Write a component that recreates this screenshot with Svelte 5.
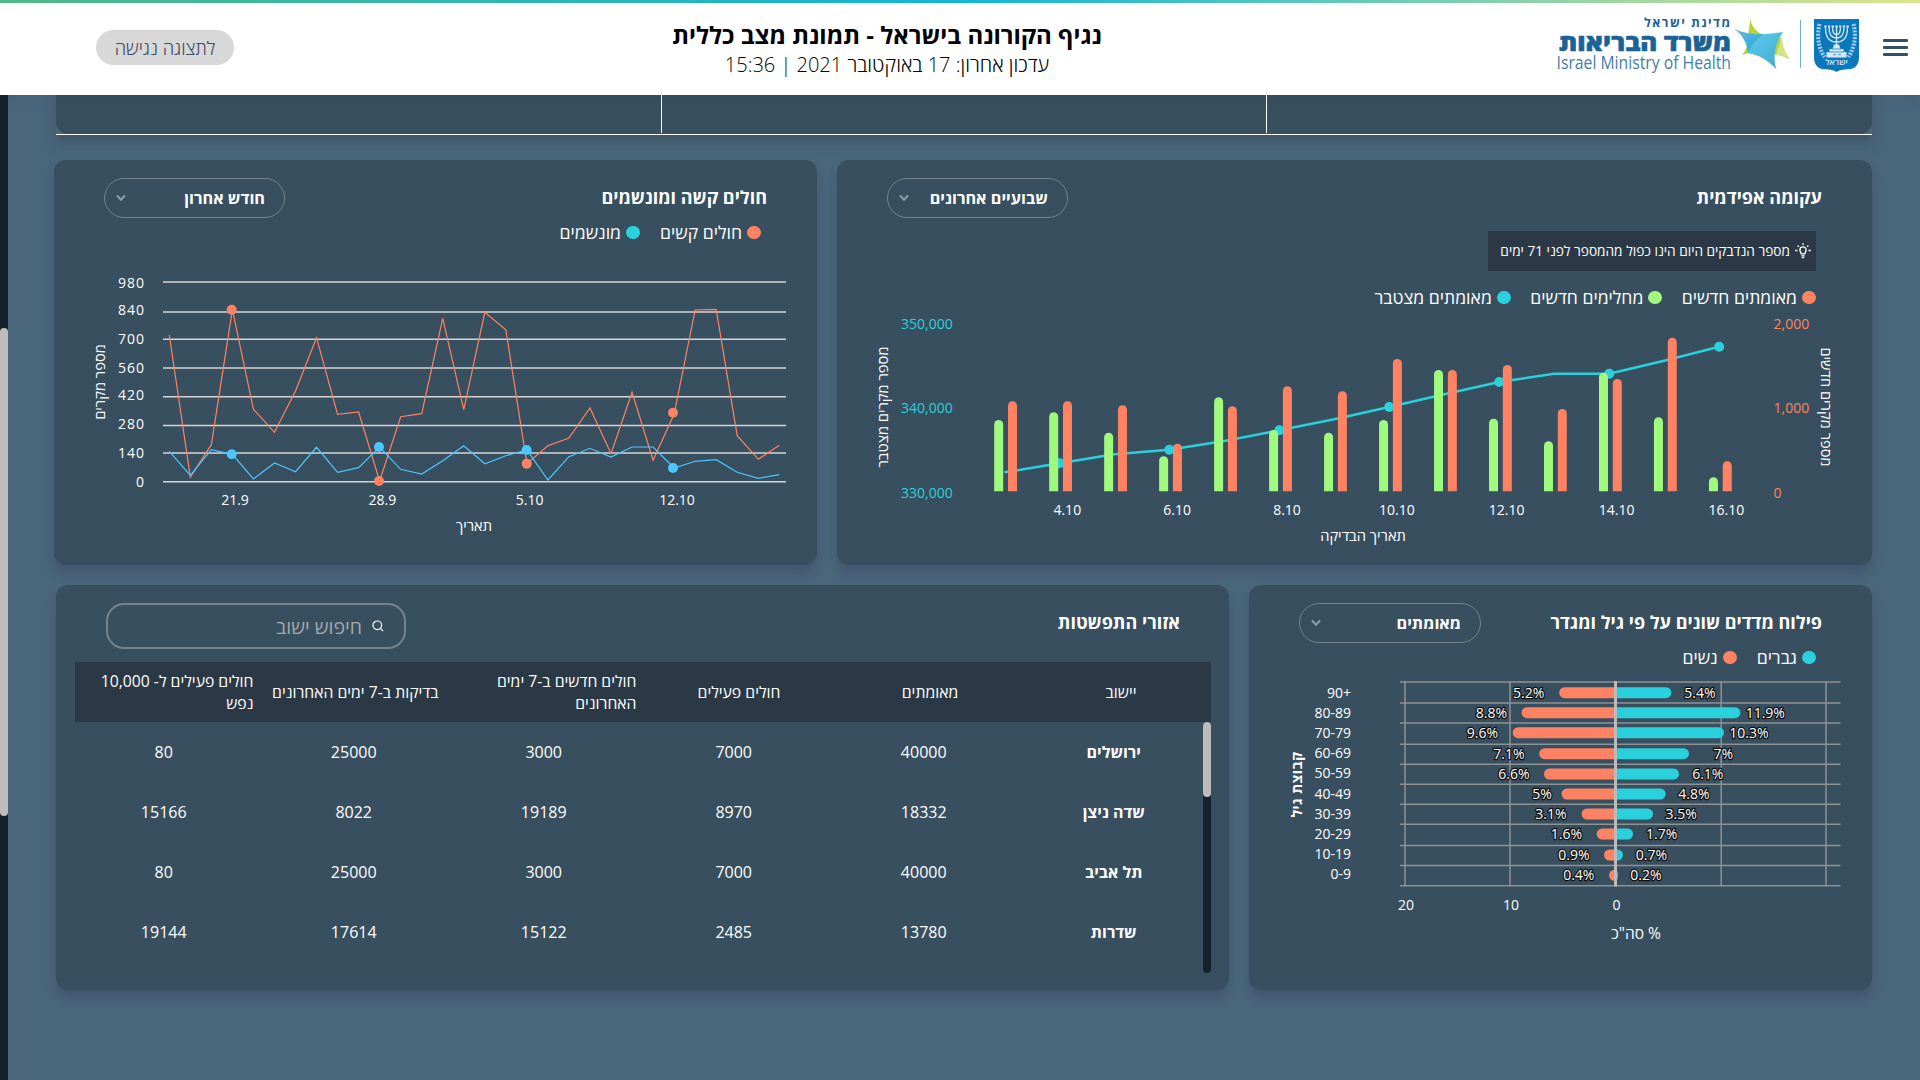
<script>
  const menuBars = [0, 1, 2];

  // Severe and ventilated patients, last month
  const patientX = (i) => 169.3 + 21.034 * i;
  const severe = [335, 477, 444.7, 309.7, 409.3, 432.3, 391, 337.7, 414.3, 412, 481, 416.7, 413.7, 318.3, 409.7, 312.3, 329.7, 463.7, 445.7, 438, 408, 453.7, 392.3, 460.3, 414, 310, 309.3, 435.7, 459.3, 445.3];
  const ventilated = [451.3, 475.3, 449.7, 454.3, 479, 463, 471.7, 447.3, 472.3, 467.7, 447, 469.3, 474, 460.7, 445.7, 463.7, 455.7, 450, 480, 456.7, 448.3, 457, 447, 447, 468, 461.3, 459.7, 472.3, 478.3, 474.7];
  const toPoints = (values, xAt) => values.map((y, i) => `${xAt(i)},${y}`).join(' ');
  const patientGrid = [
    { label: '980', y: 282, base: 288 },
    { label: '840', y: 312, base: 315 },
    { label: '700', y: 339.2, base: 344 },
    { label: '560', y: 368, base: 373 },
    { label: '420', y: 396.8, base: 400 },
    { label: '280', y: 425.4, base: 429 },
    { label: '140', y: 453, base: 458 },
    { label: '0', y: 481.8, base: 487 }
  ];
  const patientDates = [
    { label: '21.9', x: 235 },
    { label: '28.9', x: 382.3 },
    { label: '5.10', x: 529.7 },
    { label: '12.10', x: 677 }
  ];
  const markers = [
    { x: 231.7, severe: 309.7, vent: 454.3 },
    { x: 379, severe: 481, vent: 447 },
    { x: 526.7, severe: 463.7, vent: 450 },
    { x: 673, severe: 412.7, vent: 468 }
  ];

  // Epidemic curve, last two weeks
  const dayX = (i) => 1004.4 + 54.98 * i;
  const recovered = [420, 412.3, 432.7, 456.3, 397.3, 430, 432.7, 420, 370, 418.7, 441.3, 372.7, 417.3, 477.3];
  const confirmed = [401.3, 401.3, 405.3, 443.7, 406.3, 386.3, 391.3, 359, 370, 365, 409, 379, 337.7, 461.3];
  const cumulative = [472.3, 463.3, 454.3, 449.7, 441, 430.3, 419.3, 407, 394.3, 382, 373.7, 373.7, 360.7, 346.7];
  const barPath = (x, top) => `M${x} 491.3V${top + 4.5}a4.5 4.5 0 0 1 9 0V491.3z`;
  const epiDates = ['4.10', '6.10', '8.10', '10.10', '12.10', '14.10', '16.10'];
  const epiScale = [
    { left: '350,000', right: '2,000', y: 329 },
    { left: '340,000', right: '1,000', y: 413 },
    { left: '330,000', right: '0', y: 498 }
  ];

  // Age and gender breakdown
  const ages = [
    { age: '90+', y: 692.7, base: 698, w: 5.2, wx: 1559.2, wl: 1528.6, m: 5.4, mx: 1671.4, ml: 1700 },
    { age: '80-89', y: 712.7, base: 718, w: 8.8, wx: 1521.6, wl: 1491.4, m: 11.9, mx: 1740.4, ml: 1765.3 },
    { age: '70-79', y: 732.7, base: 738, w: 9.6, wx: 1512.7, wl: 1482.4, m: 10.3, mx: 1724, ml: 1749 },
    { age: '60-69', y: 753.7, base: 758, w: 7.1, wx: 1539.2, wl: 1509, m: 7, mx: 1689, ml: 1723.3 },
    { age: '50-59', y: 774, base: 778, w: 6.6, wx: 1544, wl: 1513.9, m: 6.1, mx: 1679, ml: 1707.8 },
    { age: '40-49', y: 794, base: 799, w: 5, wx: 1561.6, wl: 1542, m: 4.8, mx: 1665.7, ml: 1693.9 },
    { age: '30-39', y: 814, base: 819, w: 3.1, wx: 1581.6, wl: 1551, m: 3.5, mx: 1653, ml: 1681.2 },
    { age: '20-29', y: 834, base: 839, w: 1.6, wx: 1596.7, wl: 1566.5, m: 1.7, mx: 1633, ml: 1661.6 },
    { age: '10-19', y: 855, base: 859, w: 0.9, wx: 1604, wl: 1573.9, m: 0.7, mx: 1622.9, ml: 1651.4 },
    { age: '0-9', y: 875.3, base: 879, w: 0.4, wx: 1609, wl: 1578.8, m: 0.2, mx: 1618, ml: 1646 }
  ];
  const ageLines = [682, 703, 723, 744.2, 764.3, 784.3, 804.3, 824.3, 845.6, 865.6, 885.8];
  const percentLines = [1405, 1510, 1721.2, 1826];
  const womenPath = (a) => {
    const r = Math.min(5.5, 1615.5 - a.wx);
    return `M1615.5 ${a.y - 5.5}H${a.wx + r}a${r} 5.5 0 0 0 0 11H1615.5z`;
  };
  const menPath = (a) => {
    const r = Math.min(5.5, a.mx - 1615.5);
    return `M1615.5 ${a.y - 5.5}H${a.mx - r}a${r} 5.5 0 0 1 0 11H1615.5z`;
  };

  const headings = ['יישוב', 'מאומתים', 'חולים פעילים', 'חולים חדשים ב-7 ימים האחרונים', 'בדיקות ב-7 ימים האחרונים', 'חולים פעילים ל- 10,000 נפש'];
  const towns = [
    ['ירושלים', 40000, 7000, 3000, 25000, 80],
    ['שדה ניצן', 18332, 8970, 19189, 8022, 15166],
    ['תל אביב', 40000, 7000, 3000, 25000, 80],
    ['שדרות', 13780, 2485, 15122, 17614, 19144]
  ];
</script>

{#snippet dropdown(label)}
  <button class="dropdown">
    <span>{label}</span>
    <svg width="10" height="8" viewBox="0 0 10 8"><path d="M1 1.500l4 4.300 4-4.300" /></svg>
  </button>
{/snippet}

{#snippet legend(items)}
  <div class="legend">
    {#each items as item}
      <span class="key"><i class={item.tone}></i>{item.text}</span>
    {/each}
  </div>
{/snippet}

<div class="page" dir="rtl">
  <header>
    <div class="brand">
      <div class="menu">{#each menuBars as bar}<i></i>{/each}</div>
      <svg class="logo" width="304" height="70" viewBox="1556 8 304 70">
        <defs>
          <linearGradient id="starBlue" x1="0" y1="0" x2="1" y2="1">
            <stop offset="0" stop-color="#6fb4dc" />
            <stop offset=".5" stop-color="#1fb0dc" />
            <stop offset="1" stop-color="#0a86c0" />
          </linearGradient>
        </defs>
        <text class="state" x="1730" y="26.800" textLength="86" lengthAdjust="spacing">מדינת ישראל</text>
        <text class="ministry" x="1731" y="51" textLength="172" lengthAdjust="spacingAndGlyphs">משרד הבריאות</text>
        <text class="english" x="1556.500" y="68.800" textLength="174.500" lengthAdjust="spacingAndGlyphs">Israel Ministry of Health</text>
        <path fill="#b5d334" d="M1750 18c1 8 6 14 14 17l16 1c1 8 4 16 10 23-9-4-18-6-25-4-8-3-15-3-23 0 5-6 7-13 6-20 1-6 2-11 2-17z" />
        <path fill="#d3e38b" d="M1783 33c-2 9 1 18 7 26-4-2-9-4-14-4z" />
        <path fill="url(#starBlue)" d="M1735 29c14 7 29 6 48 3-9 12-10 24-7 37-7-8-16-14-28-16-1-10-5-17-13-24z" />
        <path fill="#9bd6ea" opacity=".4" d="M1748 53c4-9 9-16 19-20l16-1c-9 12-10 24-7 37-7-8-16-14-28-16z" />
        <path stroke="#6fb0d8" stroke-width="1" d="M1800.500 20v48" />
        <path fill="#0b78be" d="M1814 19h45v38c0 8-4 12-11 12.300-5 .2-9 .7-11.500 2.700-2.500-2-6.500-2.500-11.500-2.700-7-.3-11-4.300-11-12.300z" />
        <g class="emblem">
          <path d="M1825.500 27.500c0 10 4 14.500 11 14.500s11-4.500 11-14.500M1829 27.500c0 7 2.500 10.500 7.500 10.500s7.500-3.500 7.500-10.500M1832.500 27.500c0 4.500 1 7 4 7s4-2.500 4-7M1836.500 26.500v24" />
          <path stroke-width="1.800" d="M1824.300 26.500h24.600" stroke-dasharray="2.300 1.400" />
        </g>
        <path fill="#d6e9f6" d="M1834 44.500h5l1.500 4.500h3v3h3v5.500h-20V52h3v-3h3z" />
        <path fill="none" stroke="#0b78be" stroke-width=".7" d="M1829 52h15M1832 49h9M1833 54.700h3M1838 54.700h3" />
        <g class="leaf">
          <path d="M1819.500 24c-2.500 10-2 22 5 33" />
          <path d="M1853.500 24c2.500 10 2 22-5 33" />
        </g>
        <text class="israel" x="1836.500" y="65">ישראל</text>
      </svg>
    </div>
    <div class="heading">
      <h1>נגיף הקורונה בישראל - תמונת מצב כללית</h1>
      <p>עדכון אחרון: 17 באוקטובר 2021 | 15:36</p>
    </div>
    <button class="access">לתצוגה נגישה</button>
  </header>

  <div class="body">
    <main>
      <div class="strip-frame">
        <div class="strip"><span></span><span></span><span></span></div>
      </div>

      <div class="row top">
        <section>
          <div class="head"><h2>עקומה אפידמית</h2>{@render dropdown('שבועיים אחרונים')}</div>
          <div class="tip">
            <svg width="16" height="16" viewBox="0 0 16 16">
              <path d="M6.200 10.800C6 9.300 4.900 8.600 4.900 6.900a3.100 3.100 0 0 1 6.200 0c0 1.700-1.100 2.400-1.300 3.900zM6.300 12.800h3.400M6.800 14.600h2.400M8 .300v1.700M.200 7.500h2.300M13.500 7.500h2.300M2.600 2.500l1.200 1.200M13.400 2.500l-1.200 1.200" />
            </svg>
            <span>מספר הנדבקים היום הינו כפול מהמספר לפני 71 ימים</span>
          </div>
          {@render legend([
            { tone: 'coral', text: 'מאומתים חדשים' },
            { tone: 'green', text: 'מחלימים חדשים' },
            { tone: 'teal', text: 'מאומתים מצטבר' }
          ])}
          <svg class="chart" width="1035" height="255" viewBox="837 310 1035 255">
            {#each epiScale as s}
              <text class="cyan" x="901" y={s.y}>{s.left}</text>
              <text class="warm" x="1773.500" y={s.y}>{s.right}</text>
            {/each}
            <polyline class="trend" points={toPoints(cumulative, dayX)} />
            {#each cumulative as y, i}
              {#if i % 2}<circle cx={dayX(i)} cy={y} r="5" fill="#2ad1dc" />{/if}
            {/each}
            {#each recovered as y, i}
              <path fill="#a0fa7d" d={barPath(dayX(i) - 10.2, y)} />
              <path fill="#ff8362" d={barPath(dayX(i) + 3.6, confirmed[i])} />
            {/each}
            {#each epiDates as d, i}
              <text class="mid" x={1067.300 + 109.850 * i} y="515">{d}</text>
            {/each}
            <text class="mid heb" x="1363" y="541">תאריך הבדיקה</text>
            <text class="mid heb" transform="translate(887.800 407) rotate(-90)">מספר מקרים מצטבר</text>
            <text class="mid heb" transform="translate(1820.500 407) rotate(90)">מספר מקרים חדשים</text>
          </svg>
        </section>

        <section>
          <div class="head"><h2>חולים קשה ומונשמים</h2>{@render dropdown('חודש אחרון')}</div>
          {@render legend([
            { tone: 'coral', text: 'חולים קשים' },
            { tone: 'teal', text: 'מונשמים' }
          ])}
          <svg class="chart" width="763" height="320" viewBox="54 245 763 320">
            {#each patientGrid as g}
              <path class="grid" d="M163 {g.y}H786" />
              <text class="scale" x="145" y={g.base}>{g.label}</text>
            {/each}
            <polyline class="thin" stroke="#ff8362" points={toPoints(severe, patientX)} />
            {#each markers as m}<circle cx={m.x} cy={m.severe} r="5" fill="#ff8362" />{/each}
            <polyline class="thin" stroke="#4cc6ff" points={toPoints(ventilated, patientX)} />
            {#each markers as m}<circle cx={m.x} cy={m.vent} r="5" fill="#4cc6ff" />{/each}
            {#each patientDates as d}<text class="mid" x={d.x} y="505">{d.label}</text>{/each}
            <text class="mid heb" x="474" y="531">תאריך</text>
            <text class="mid heb" transform="translate(105 382) rotate(-90)">מספר מקרים</text>
          </svg>
        </section>
      </div>

      <div class="row bottom">
        <section>
          <div class="head"><h2>פילוח מדדים שונים על פי גיל ומגדר</h2>{@render dropdown('מאומתים')}</div>
          {@render legend([
            { tone: 'teal', text: 'גברים' },
            { tone: 'coral', text: 'נשים' }
          ])}
          <svg class="chart" width="623" height="320" viewBox="1249 670 623 320">
            {#each ageLines as y}<path class="cell" d="M1400 {y}H1840.500" />{/each}
            {#each percentLines as x}<path class="cell" d="M{x} 681V886.500" />{/each}
            {#each ages as a}
              <path fill="#ff8362" d={womenPath(a)} />
              <path fill="#2ad1dc" d={menPath(a)} />
            {/each}
            <path class="zero" d="M1615.500 681V886.500" />
            {#each ages as a}
              <text class="end" x="1351" y={a.base}>{a.age}</text>
              <text class="mid value" x={a.wl} y={a.y + 4.9}>{a.w}%</text>
              <text class="mid value" x={a.ml} y={a.y + 4.9}>{a.m}%</text>
            {/each}
            <text class="mid" x="1406" y="910">20</text>
            <text class="mid" x="1511" y="910">10</text>
            <text class="mid" x="1616.500" y="910">0</text>
            <text class="mid heb total" x="1636" y="938.500">% סה"כ</text>
            <text class="mid heb strong" transform="translate(1302 784.500) rotate(-90)">קבוצת גיל</text>
          </svg>
        </section>

        <section>
          <div class="head">
            <h2>אזורי התפשטות</h2>
            <div class="search">
              <svg width="12" height="12" viewBox="0 0 12 12"><circle cx="5.300" cy="5.300" r="4.300" /><path d="M8.400 8.400l2.600 2.600" /></svg>
              <span>חיפוש ישוב</span>
            </div>
          </div>
          <div class="table">
            <div class="thead">
              {#each headings as h}<div>{h}</div>{/each}
            </div>
            <div class="tbody">
              <div class="lines">
                {#each towns as town}
                  <div class="line-row">
                    {#each town as cell}<div>{cell}</div>{/each}
                  </div>
                {/each}
              </div>
              <div class="track"><div class="thumb"></div></div>
            </div>
          </div>
        </section>
      </div>
    </main>
    <div class="page-track"><div class="page-thumb"></div></div>
  </div>
</div>

<style>
  :global(body) {
    background: #4a667b;
  }
  .page {
    width: 1920px;
    height: 1080px;
    overflow: hidden;
    display: flex;
    flex-direction: column;
    background: #4a667b;
    color: #fff;
    font-family: 'Open Sans', 'Noto Sans', sans-serif;
  }
  h1,
  h2,
  p {
    margin: 0;
  }
  button {
    font-family: inherit;
    padding: 0;
    box-sizing: border-box;
  }
  header {
    position: relative;
    z-index: 1;
    flex: none;
    height: 95px;
    box-sizing: border-box;
    padding: 0 12px 0 96px;
    display: grid;
    grid-template-columns: 1fr 600px 491px;
    align-items: start;
    background:
      linear-gradient(90deg, #50b987, #12b5d8 50%, #dce689) top / 100% 3px no-repeat,
      #fff;
    box-shadow: 0 3px 16px rgba(50, 60, 90, 0.12);
  }
  .brand {
    display: flex;
    gap: 23px;
    padding-top: 8px;
  }
  .menu {
    width: 25px;
    padding-top: 31px;
    display: flex;
    flex-direction: column;
    gap: 4px;
  }
  .menu i {
    height: 3px;
    border-radius: 1px;
    background: #384f63;
  }
  .logo .state,
  .logo .ministry {
    direction: rtl;
    fill: #1b6296;
  }
  .logo .state {
    font-size: 12.5px;
    font-weight: 700;
  }
  .logo .ministry {
    font-size: 24px;
    font-weight: 800;
    stroke: #1b6296;
    stroke-width: 0.5px;
  }
  .logo .english {
    direction: ltr;
    font-size: 17.5px;
    fill: #3f7fae;
  }
  .logo .israel {
    direction: rtl;
    text-anchor: middle;
    font-size: 8.5px;
    font-weight: 600;
    fill: #d6e9f6;
  }
  .emblem {
    fill: none;
    stroke: #d6e9f6;
    stroke-width: 1.3;
  }
  .leaf {
    fill: none;
    stroke: #a9d0ea;
    stroke-width: 4;
    stroke-dasharray: 2 1.3;
  }
  .heading {
    padding-top: 18px;
    text-align: center;
    color: #000;
  }
  h1 {
    font-size: 24px;
    line-height: 33px;
    font-weight: 700;
  }
  .heading p {
    font-size: 20px;
    line-height: 27px;
    font-weight: 300;
  }
  .access {
    justify-self: end;
    width: 138px;
    height: 35px;
    margin-top: 30px;
    border: 0;
    border-radius: 18px;
    background: #d8d8d8;
    color: #3f4a63;
    font-size: 18.4px;
    font-weight: 300;
  }
  .body {
    flex: 1;
    display: flex;
    justify-content: space-between;
  }
  main {
    padding-right: 48px;
  }
  .page-track {
    width: 8px;
    background: #15222b;
  }
  .page-thumb {
    height: 488px;
    margin-top: 233px;
    border-radius: 4px;
    background: #c0bcbc;
  }
  .strip-frame {
    width: 1816px;
    border-bottom: 1px solid #fff;
    box-shadow: 0 8px 10px rgba(56, 72, 88, 0.5);
  }
  .strip {
    height: 39px;
    display: grid;
    grid-template-columns: 606px 605px 605px;
    border-radius: 0 0 12px 12px;
    background: #384f5f;
  }
  .strip span {
    margin-bottom: 1px;
    border-left: 1px solid #fff;
  }
  .strip span:last-child {
    border: 0;
  }
  .row {
    display: flex;
    gap: 20px;
  }
  .top {
    margin-top: 25px;
  }
  .bottom {
    margin-top: 20px;
  }
  section {
    height: 405px;
    border-radius: 12px;
    background: #384f5f;
    box-shadow: 0 8px 10px rgba(56, 72, 98, 0.45);
  }
  .top section:first-child {
    width: 1035px;
  }
  .top section:last-child {
    width: 763px;
  }
  .bottom section:first-child {
    width: 623px;
  }
  .bottom section:last-child {
    width: 1173px;
  }
  .head {
    height: 40px;
    padding: 18px 50px 0;
    display: flex;
    justify-content: space-between;
  }
  .bottom section:last-child .head {
    padding-right: 49px;
  }
  h2 {
    font-size: 18px;
    line-height: 38px;
    font-weight: 700;
  }
  .dropdown {
    width: 181px;
    height: 40px;
    padding: 0 19px 1px 11px;
    border: 1px solid #76828b;
    border-radius: 20px;
    display: flex;
    align-items: center;
    justify-content: space-between;
    background: none;
    color: #fff;
    font-size: 16.2px;
    font-weight: 700;
  }
  .bottom .dropdown {
    width: 182px;
  }
  .dropdown svg {
    fill: none;
    stroke: #8c9bb5;
    stroke-width: 2;
  }
  .tip {
    width: 328px;
    height: 40px;
    box-sizing: border-box;
    margin: 13px 56px 0 0;
    padding: 0 5px 1px 0;
    display: flex;
    align-items: center;
    gap: 5px;
    background: #2b3947;
    font-size: 13.65px;
  }
  .tip svg {
    fill: none;
    stroke: #fff;
    stroke-width: 1.3;
  }
  .legend {
    height: 25px;
    margin: 2px 56px 0 0;
    display: flex;
    align-items: center;
    gap: 20px;
    font-size: 17.6px;
    line-height: 25px;
  }
  .tip + .legend {
    margin-top: 14px;
    gap: 19.5px;
  }
  .key {
    display: flex;
    align-items: center;
    gap: 5px;
  }
  .key i {
    width: 14px;
    height: 13px;
    border-radius: 7px;
  }
  .coral {
    background: #ff8362;
  }
  .green {
    background: #a0fa7d;
  }
  .teal {
    background: #2ad1dc;
  }
  .chart {
    display: block;
    direction: ltr;
    font-size: 14px;
    fill: #fff;
  }
  .mid {
    text-anchor: middle;
  }
  .end {
    text-anchor: end;
  }
  .heb {
    direction: rtl;
    font-size: 14.7px;
  }
  .total {
    font-size: 15.5px;
  }
  .strong {
    font-size: 14.2px;
    font-weight: 700;
    letter-spacing: 0.4px;
  }
  .scale {
    text-anchor: end;
    letter-spacing: 1px;
  }
  .cyan {
    fill: #2ad1dc;
  }
  .warm {
    fill: #ff8362;
  }
  .trend {
    fill: none;
    stroke: #2ad1dc;
    stroke-width: 2.5;
  }
  .thin {
    fill: none;
    stroke-width: 1.2;
  }
  .grid {
    stroke: #d5d5d5;
    stroke-width: 1.5;
  }
  .cell {
    stroke: #8f9294;
    stroke-width: 1.5;
  }
  .zero {
    stroke: #bbb;
    stroke-width: 3;
  }
  .value {
    stroke: #111;
    stroke-width: 2.5px;
    paint-order: stroke;
    stroke-linejoin: round;
  }
  .search {
    width: 300px;
    height: 46px;
    box-sizing: border-box;
    padding-right: 20px;
    border: 2px solid #76828b;
    border-radius: 18px;
    display: flex;
    align-items: center;
    gap: 10px;
    color: #a3a8ab;
    font-size: 19.5px;
  }
  .search svg {
    fill: none;
    stroke: #fff;
    stroke-width: 1.2;
  }
  .table {
    width: 1136px;
    margin: 19px 18px 0 0;
    font-size: 16px;
  }
  .thead {
    height: 60px;
    display: grid;
    grid-template-columns: 180px 202px 180px 198px 185px 191px;
    align-items: center;
    background: #2b3947;
    font-size: 15.75px;
    line-height: 22px;
  }
  .thead div:nth-child(-n + 3) {
    text-align: center;
  }
  .thead div:nth-child(n + 4) {
    padding-right: 12.5px;
  }
  .thead div:nth-child(4) {
    padding-left: 36px;
  }
  .tbody {
    position: relative;
    height: 251px;
  }
  .lines {
    width: 1140px;
    padding-right: 2.3px;
  }
  .line-row {
    height: 60px;
    display: grid;
    grid-template-columns: repeat(6, 190px);
    align-items: center;
    text-align: center;
  }
  .line-row div:first-child {
    font-weight: 700;
  }
  .track {
    position: absolute;
    top: 0;
    right: 0;
    width: 8px;
    height: 251px;
    border-radius: 4px;
    background: #15222b;
  }
  .thumb {
    height: 75px;
    border-radius: 4px;
    background: #bfbbbb;
  }
</style>
